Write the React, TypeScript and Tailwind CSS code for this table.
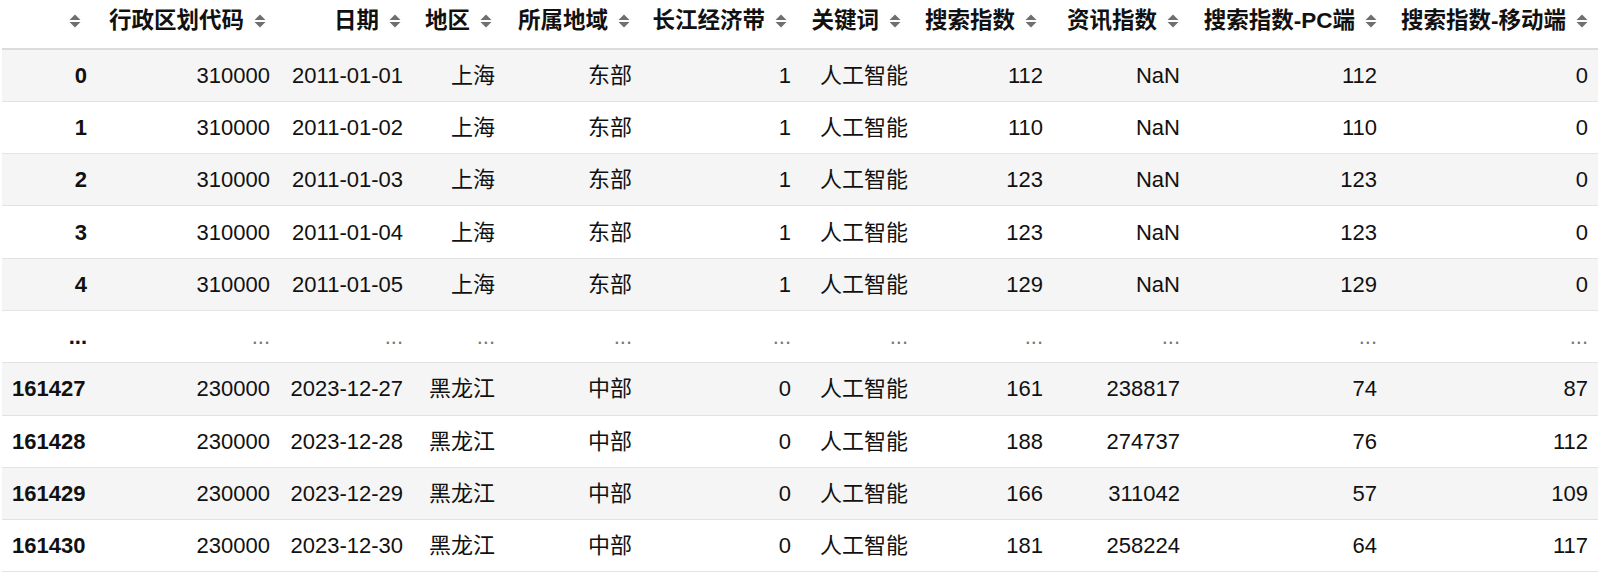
import React from "react";

const columns = [
  { label: "", width: 95, pr: "pr-[16px]" },
  { label: "行政区划代码", width: 183, pr: "pr-[14px]" },
  { label: "日期", width: 133, pr: "pr-[12px]" },
  { label: "地区", width: 92, pr: "pr-[13px]" },
  { label: "所属地域", width: 137, pr: "pr-[12px]" },
  { label: "长江经济带", width: 159, pr: "pr-[14px]" },
  { label: "关键词", width: 117, pr: "pr-[17px]" },
  { label: "搜索指数", width: 135, pr: "pr-[16px]" },
  { label: "资讯指数", width: 137, pr: "pr-[11px]" },
  { label: "搜索指数-PC端", width: 197, pr: "pr-[10px]" },
  { label: "搜索指数-移动端", width: 211, pr: "pr-[10px]" },
];

const rows: string[][] = [
  ["0", "310000", "2011-01-01", "上海", "东部", "1", "人工智能", "112", "NaN", "112", "0"],
  ["1", "310000", "2011-01-02", "上海", "东部", "1", "人工智能", "110", "NaN", "110", "0"],
  ["2", "310000", "2011-01-03", "上海", "东部", "1", "人工智能", "123", "NaN", "123", "0"],
  ["3", "310000", "2011-01-04", "上海", "东部", "1", "人工智能", "123", "NaN", "123", "0"],
  ["4", "310000", "2011-01-05", "上海", "东部", "1", "人工智能", "129", "NaN", "129", "0"],
  ["...", "...", "...", "...", "...", "...", "...", "...", "...", "...", "..."],
  ["161427", "230000", "2023-12-27", "黑龙江", "中部", "0", "人工智能", "161", "238817", "74", "87"],
  ["161428", "230000", "2023-12-28", "黑龙江", "中部", "0", "人工智能", "188", "274737", "76", "112"],
  ["161429", "230000", "2023-12-29", "黑龙江", "中部", "0", "人工智能", "166", "311042", "57", "109"],
  ["161430", "230000", "2023-12-30", "黑龙江", "中部", "0", "人工智能", "181", "258224", "64", "117"],
];

function SortIcon() {
  return (
    <svg width="12" height="14" viewBox="0 0 12 14" className="inline-block shrink-0">
      <path d="M6 0.5 L11.5 6 L0.5 6 Z" fill="#6f6f6f" />
      <path d="M0.5 8 L11.5 8 L6 13.5 Z" fill="#6f6f6f" />
    </svg>
  );
}

export default function App() {
  return (
    <div
      className="w-[1608px] h-[573px] bg-white overflow-hidden pl-[2px]"
      style={{ fontFamily: '"Liberation Sans", Arial, "Noto Sans CJK SC", sans-serif' }}
    >
      <table className="table-fixed border-collapse text-[22px] text-[#111] w-[1596px]">
        <colgroup>
          {columns.map((c, i) => (
            <col key={i} style={{ width: c.width }} />
          ))}
        </colgroup>
        <thead>
          <tr className="h-[49px] border-b-2 border-[#dcdcdc]">
            {columns.map((c, i) => (
              <th key={i} className={`font-bold pl-[4px] ${c.pr} pb-[6px] align-middle text-[22.5px]`}>
                <div className="flex items-center justify-end gap-[10px] whitespace-nowrap">
                  {c.label && <span>{c.label}</span>}
                  <SortIcon />
                </div>
              </th>
            ))}
          </tr>
        </thead>
        <tbody>
          {rows.map((r, ri) => {
            const gap = r[0] === "...";
            return (
              <tr
                key={ri}
                className={`h-[52.3px] border-b border-[#e3e3e3] ${ri % 2 === 0 ? "bg-[#f5f5f5]" : "bg-white"}`}
              >
                {r.map((v, ci) => (
                  <td
                    key={ci}
                    className={
                      ci === 0
                        ? "font-bold px-[10px] align-middle whitespace-nowrap " +
                          (v.length > 3 ? "text-left" : "text-right")
                        : "text-right px-[10px] align-middle whitespace-nowrap " +
                          (gap ? "text-[#777]" : "")
                    }
                  >
                    {v}
                  </td>
                ))}
              </tr>
            );
          })}
        </tbody>
      </table>
    </div>
  );
}
